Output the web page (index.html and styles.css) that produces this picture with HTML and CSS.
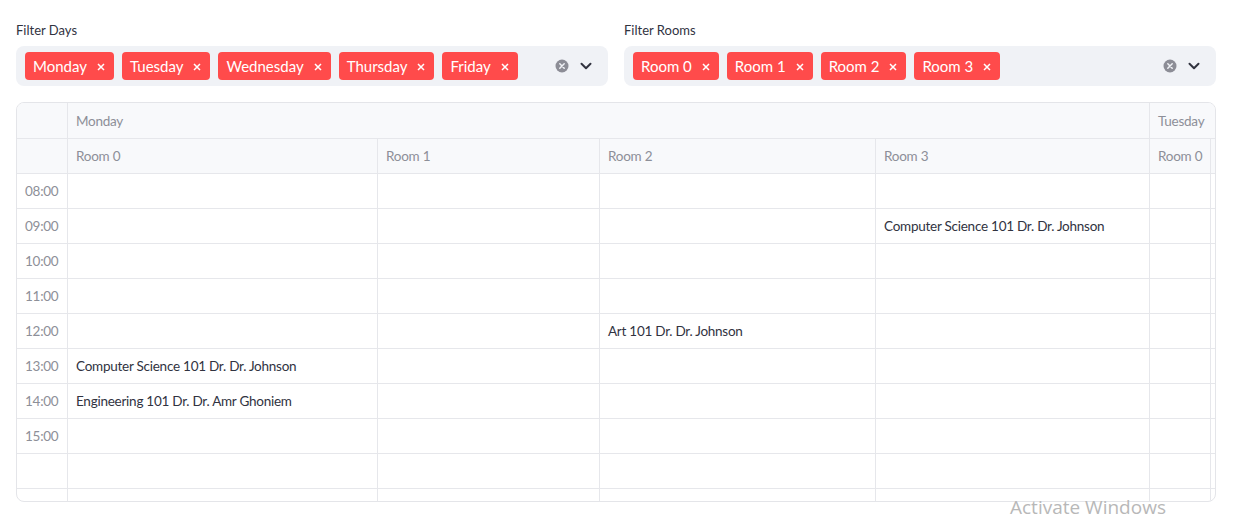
FILE: index.html
```html
<!DOCTYPE html>
<html>
<head>
<meta charset="utf-8">
<link rel="stylesheet" href="styles.css">
</head>
<body>
<div class="page">
  <div class="filters">
    <div class="filter">
      <div class="label">Filter Days</div>
      <div class="select">
        <div class="tags">
          <span class="tag">Monday<svg class="x" viewBox="0 0 8 8"><path d="M1 1L7 7M7 1L1 7"/></svg></span>
          <span class="tag">Tuesday<svg class="x" viewBox="0 0 8 8"><path d="M1 1L7 7M7 1L1 7"/></svg></span>
          <span class="tag">Wednesday<svg class="x" viewBox="0 0 8 8"><path d="M1 1L7 7M7 1L1 7"/></svg></span>
          <span class="tag">Thursday<svg class="x" viewBox="0 0 8 8"><path d="M1 1L7 7M7 1L1 7"/></svg></span>
          <span class="tag">Friday<svg class="x" viewBox="0 0 8 8"><path d="M1 1L7 7M7 1L1 7"/></svg></span>
        </div>
        <div class="controls">
          <svg class="clear" viewBox="0 0 14 14"><circle cx="7" cy="7" r="6.5"/><path d="M4.8 4.8L9.2 9.2M9.2 4.8L4.8 9.2"/></svg>
          <svg class="chev" viewBox="0 0 12 8"><path d="M1.5 1.8L6 6.2L10.5 1.8"/></svg>
        </div>
      </div>
    </div>
    <div class="filter">
      <div class="label">Filter Rooms</div>
      <div class="select">
        <div class="tags">
          <span class="tag">Room 0<svg class="x" viewBox="0 0 8 8"><path d="M1 1L7 7M7 1L1 7"/></svg></span>
          <span class="tag">Room 1<svg class="x" viewBox="0 0 8 8"><path d="M1 1L7 7M7 1L1 7"/></svg></span>
          <span class="tag">Room 2<svg class="x" viewBox="0 0 8 8"><path d="M1 1L7 7M7 1L1 7"/></svg></span>
          <span class="tag">Room 3<svg class="x" viewBox="0 0 8 8"><path d="M1 1L7 7M7 1L1 7"/></svg></span>
        </div>
        <div class="controls">
          <svg class="clear" viewBox="0 0 14 14"><circle cx="7" cy="7" r="6.5"/><path d="M4.8 4.8L9.2 9.2M9.2 4.8L4.8 9.2"/></svg>
          <svg class="chev" viewBox="0 0 12 8"><path d="M1.5 1.8L6 6.2L10.5 1.8"/></svg>
        </div>
      </div>
    </div>
  </div>

  <div class="grid-wrap">
    <div class="grid">
      <div class="c h"></div>
      <div class="c h group">Monday</div>
      <div class="c h group2">Tuesday</div>

      <div class="c h"></div>
      <div class="c h">Room 0</div>
      <div class="c h">Room 1</div>
      <div class="c h">Room 2</div>
      <div class="c h">Room 3</div>
      <div class="c h">Room 0</div>
      <div class="c h"></div>

      <div class="c i">08:00</div><div class="c"></div><div class="c"></div><div class="c"></div><div class="c"></div><div class="c"></div><div class="c"></div>
      <div class="c i">09:00</div><div class="c"></div><div class="c"></div><div class="c"></div><div class="c">Computer Science 101 Dr. Dr. Johnson</div><div class="c"></div><div class="c"></div>
      <div class="c i">10:00</div><div class="c"></div><div class="c"></div><div class="c"></div><div class="c"></div><div class="c"></div><div class="c"></div>
      <div class="c i">11:00</div><div class="c"></div><div class="c"></div><div class="c"></div><div class="c"></div><div class="c"></div><div class="c"></div>
      <div class="c i">12:00</div><div class="c"></div><div class="c"></div><div class="c">Art 101 Dr. Dr. Johnson</div><div class="c"></div><div class="c"></div><div class="c"></div>
      <div class="c i">13:00</div><div class="c">Computer Science 101 Dr. Dr. Johnson</div><div class="c"></div><div class="c"></div><div class="c"></div><div class="c"></div><div class="c"></div>
      <div class="c i">14:00</div><div class="c">Engineering 101 Dr. Dr. Amr Ghoniem</div><div class="c"></div><div class="c"></div><div class="c"></div><div class="c"></div><div class="c"></div>
      <div class="c i">15:00</div><div class="c"></div><div class="c"></div><div class="c"></div><div class="c"></div><div class="c"></div><div class="c"></div>
      <div class="c i"></div><div class="c"></div><div class="c"></div><div class="c"></div><div class="c"></div><div class="c"></div><div class="c"></div>
      <div class="c i"></div><div class="c"></div><div class="c"></div><div class="c"></div><div class="c"></div><div class="c"></div><div class="c"></div>
    </div>
  </div>
</div>
<div class="watermark">Activate Windows</div>
</body>
</html>
```

FILE: styles.css
```css
* { box-sizing: border-box; }
html, body { margin: 0; padding: 0; background: #ffffff; }
body {
  font-family: "Lato", "Open Sans", sans-serif;
  color: #31333f;
  width: 1254px;
  height: 518px;
  overflow: hidden;
  position: relative;
}
.page {
  padding: 19px 0 0 16px;
  width: 1216px;
}
.filters {
  display: flex;
  gap: 16px;
}
.filter { flex: 0 0 592px; }
.label {
  font-size: 13px;
  line-height: 22px;
  height: 22px;
  margin-bottom: 5px;
  color: #31333f;
}
.select {
  height: 40px;
  background: #f0f2f6;
  border-radius: 8px;
  display: flex;
  align-items: center;
  justify-content: space-between;
  padding: 0 16px 0 9px;
}
.tags { display: flex; gap: 8px; }
.tag {
  display: inline-flex;
  align-items: center;
  height: 28px;
  padding: 0 9px 0 8px;
  background: #ff4b4b;
  color: #ffffff;
  border-radius: 4px;
  font-size: 15px;
}
.tag .x {
  width: 8px;
  height: 8px;
  margin-left: 10px;
  margin-top: 1px;
  fill: none;
  stroke: #ffffff;
  stroke-width: 1.5;
}
.controls {
  display: flex;
  align-items: center;
  gap: 11px;
}
.clear { width: 14px; height: 14px; }
.clear circle { fill: #8c8d96; }
.clear path { stroke: #f0f2f6; stroke-width: 1.5; fill: none; stroke-linecap: round; }
.chev { width: 12px; height: 8px; }
.chev path { stroke: #31333f; stroke-width: 2; fill: none; stroke-linecap: round; stroke-linejoin: round; }

.grid-wrap {
  margin-top: 16px;
  width: 1200px;
  height: 400px;
  border: 1px solid #e4e5e9;
  border-radius: 8px;
  overflow: hidden;
}
.grid {
  display: grid;
  grid-template-columns: 51px 310px 222px 276px 274px 61px 120px;
  grid-template-rows: 36px 35px repeat(10, 35px);
  font-size: 13.5px;
  letter-spacing: -0.25px;
}
.c {
  border-right: 1px solid #e6e7eb;
  border-bottom: 1px solid #e6e7eb;
  padding: 0 8px;
  display: flex;
  align-items: center;
  white-space: nowrap;
  overflow: hidden;
  color: #31333f;
}
.h {
  background: #f8f9fb;
  color: #8d8f98;
}
.group { grid-column: span 4; }
.group2 { grid-column: span 2; }
.i { color: #8d8f98; }
.watermark {
  position: absolute;
  left: 1010px;
  top: 498px;
  line-height: 18px;
  font-family: "Open Sans", sans-serif;
  font-size: 19px;
  color: #b8b8b8;
  white-space: nowrap;
}
```
